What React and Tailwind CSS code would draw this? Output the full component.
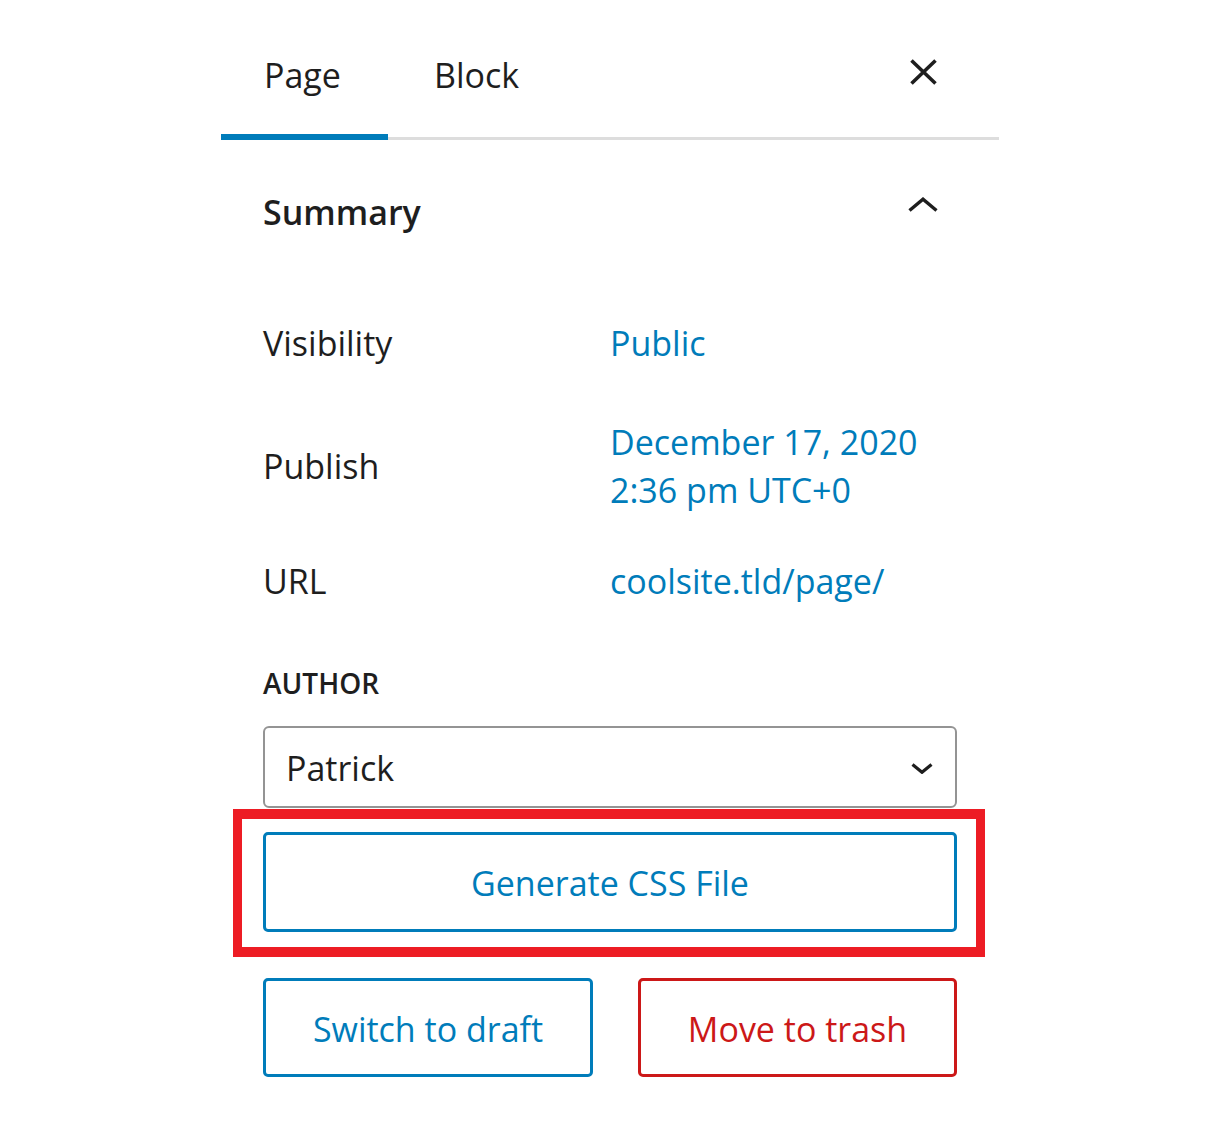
export default function App() {
  return (
    <div className="w-[1220px] h-[1132px] bg-white font-['Open_Sans',sans-serif] text-[#1e1e1e]">
      <div className="ml-[221px] w-[778px]">
        {/* Tabs header */}
        <div className="flex h-[140px] items-stretch border-b-[3px] border-[#dddddd]">
          <div className="w-[167px] h-[140px] -mb-[3px] pl-[43px] pt-[16px] flex items-center border-b-[6px] border-[#007cba] text-[34px]">
            Page
          </div>
          <div className="pl-[46px] pt-[14px] flex items-center text-[34px]">Block</div>
          <div className="flex-1" />
          <div className="flex items-center pr-[62px] pt-[7px]">
            <svg width="27" height="26" viewBox="0 0 27 26" fill="none">
              <path d="M1.5 1.5L25.5 24.5M25.5 1.5L1.5 24.5" stroke="#1e1e1e" strokeWidth="3.6" />
            </svg>
          </div>
        </div>

        <div className="px-[42px]">
          {/* Summary */}
          <div className="flex h-[144px] items-center justify-between">
            <span className="text-[34px] font-semibold">Summary</span>
            <svg className="mb-[15px] mr-[19px]" width="30" height="15" viewBox="0 0 30 15" fill="none">
              <path d="M1.5 13.5L15 2.2L28.5 13.5" stroke="#1e1e1e" strokeWidth="3.4" />
            </svg>
          </div>

          {/* Rows */}
          <div className="flex h-[118px] items-center text-[34px]">
            <div className="w-[347px]">Visibility</div>
            <div className="text-[#007cba]">Public</div>
          </div>
          <div className="flex h-[128px] items-center text-[34px]">
            <div className="w-[347px]">Publish</div>
            <div className="text-[#007cba] leading-[48px]">
              <div>December 17, 2020</div>
              <div>2:36 pm UTC+0</div>
            </div>
          </div>
          <div className="flex h-[102px] items-center text-[34px]">
            <div className="w-[347px]">URL</div>
            <div className="text-[#007cba]">coolsite.tld/page/</div>
          </div>

          {/* Author */}
          <div className="flex h-[94px] items-center pt-[8px]">
            <span className="text-[28px] font-semibold uppercase">Author</span>
          </div>
          <div className="flex h-[82px] items-center justify-between rounded-[6px] border-2 border-[#949494] pl-[21px] pr-[22px] pt-[2px]">
            <span className="text-[34px]">Patrick</span>
            <svg width="22" height="11" viewBox="0 0 22 11" fill="none">
              <path d="M1.5 1.5L11 9.3L20.5 1.5" stroke="#1e1e1e" strokeWidth="3.2" />
            </svg>
          </div>

          {/* Highlighted Generate CSS button */}
          <div className="mt-[1px] -ml-[30px] -mr-[28px] h-[148px] border-x-[9px] border-y-[10px] border-[#ed1c24] pl-[21px] pr-[19px] pt-[13px]">
            <button className="flex h-[100px] w-full items-center justify-center rounded-[5px] border-[3px] border-[#007cba] pt-[3px] text-[34px] text-[#007cba]">
              Generate CSS File
            </button>
          </div>

          {/* Bottom buttons */}
          <div className="mt-[21px] flex justify-between">
            <button className="flex h-[99px] w-[330px] items-center justify-center rounded-[5px] border-[3px] border-[#007cba] pt-[4px] text-[34px] text-[#007cba]">
              Switch to draft
            </button>
            <button className="flex h-[99px] w-[319px] items-center justify-center rounded-[5px] border-[3px] border-[#cc1818] pt-[4px] text-[34px] text-[#cc1818]">
              Move to trash
            </button>
          </div>
        </div>
      </div>
    </div>
  );
}
